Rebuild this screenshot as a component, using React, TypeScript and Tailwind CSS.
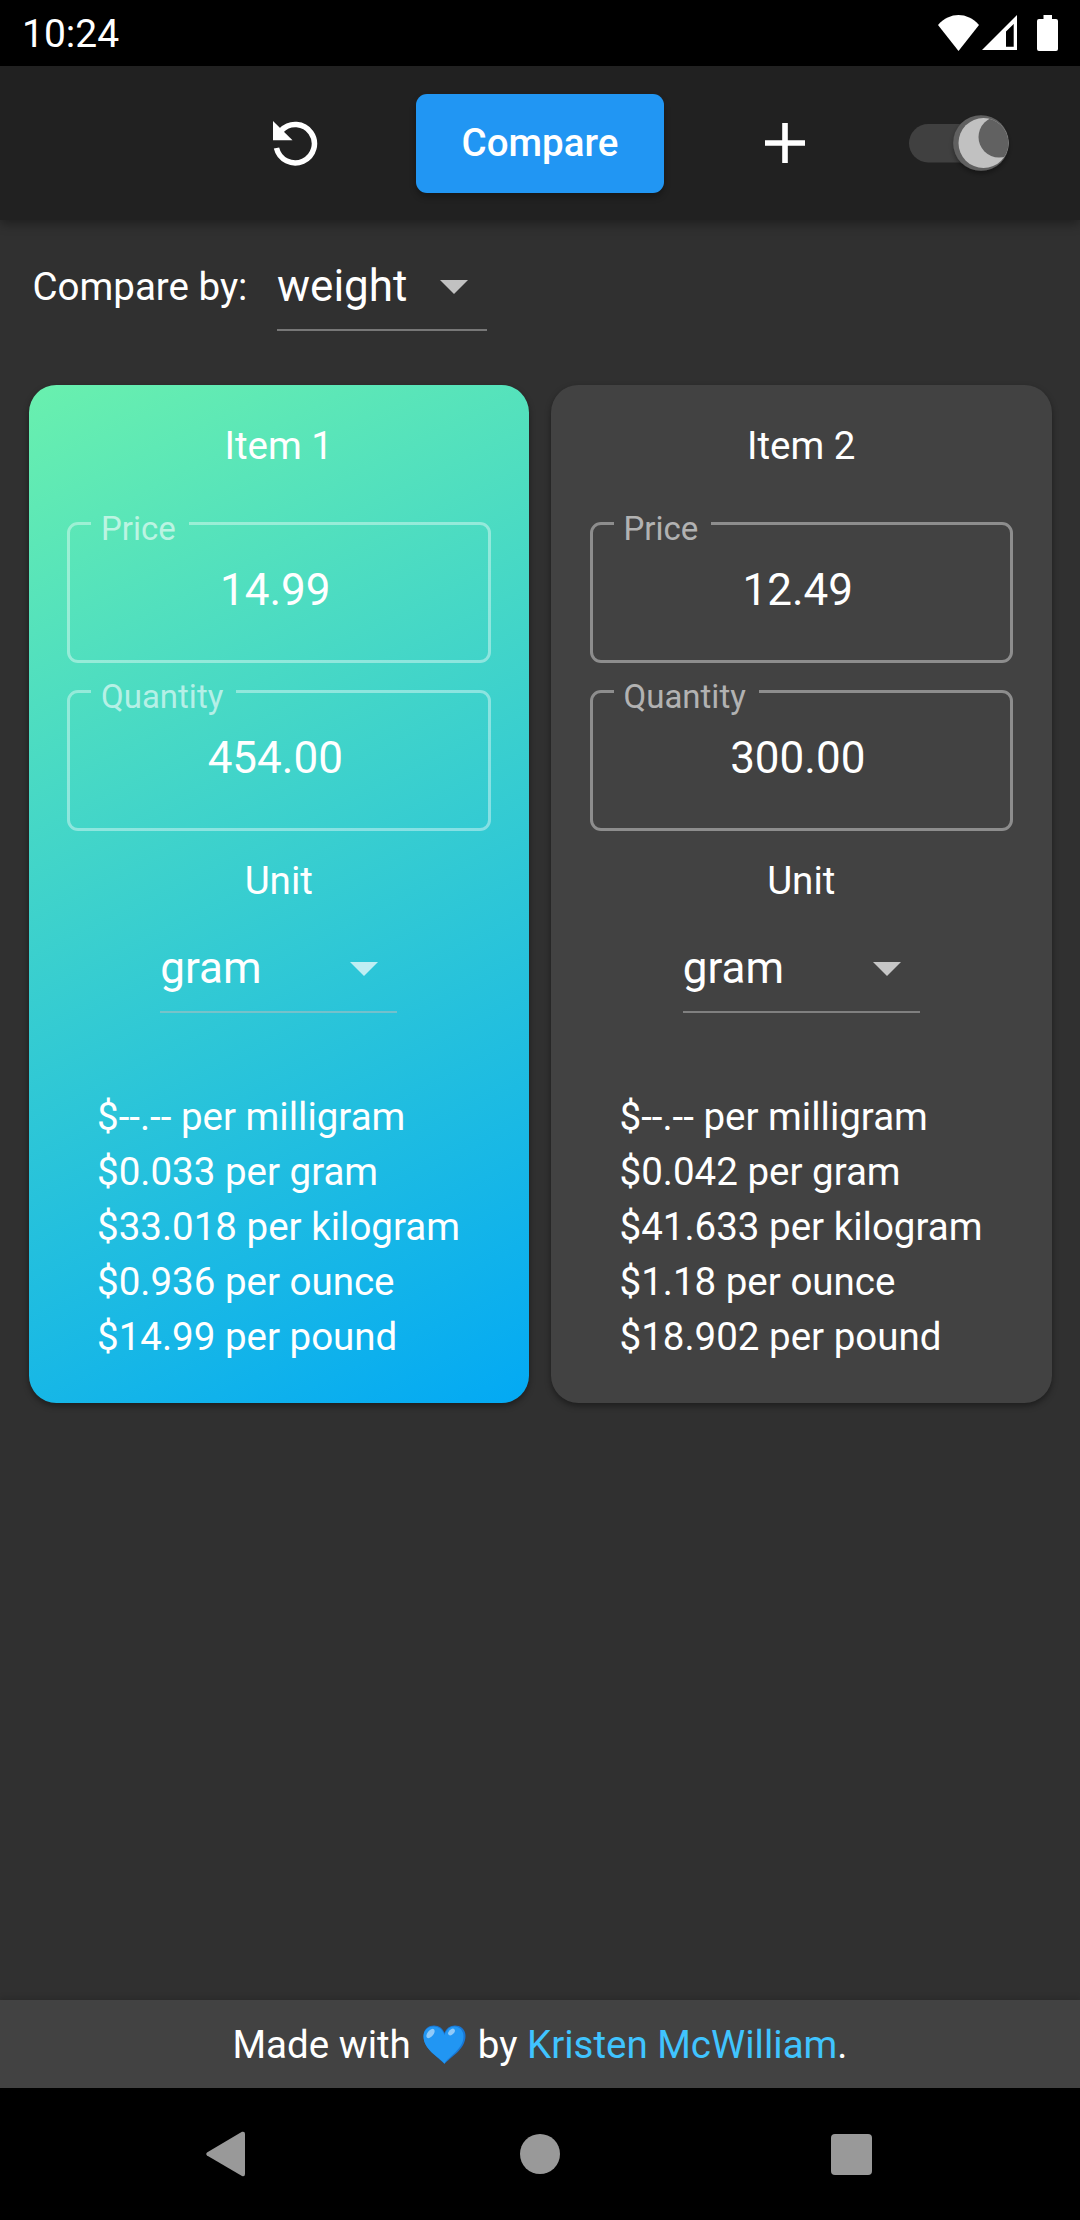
import React from 'react';

type Item = { title: string; price: string; quantity: string; unit: string; rates: string[]; best?: boolean };

const items: Item[] = [
  {
    title: 'Item 1',
    price: '14.99',
    quantity: '454.00',
    unit: 'gram',
    best: true,
    rates: ['$--.-- per milligram', '$0.033 per gram', '$33.018 per kilogram', '$0.936 per ounce', '$14.99 per pound'],
  },
  {
    title: 'Item 2',
    price: '12.49',
    quantity: '300.00',
    unit: 'gram',
    rates: ['$--.-- per milligram', '$0.042 per gram', '$41.633 per kilogram', '$1.18 per ounce', '$18.902 per pound'],
  },
];

function Caret() {
  return (
    <svg className="h-[14px] w-[28px] shrink-0 opacity-70" viewBox="0 0 28 14" fill="white">
      <path d="M0 0h28L14 14z" />
    </svg>
  );
}

function StatusBar() {
  return (
    <div className="flex h-[66px] shrink-0 items-start justify-between bg-black pl-[22px] pr-[22px]">
      <span className="mt-[10px] text-[39px] leading-[48px]">10:24</span>
      <div className="mt-[15px] flex items-start">
        <svg className="mr-[3px] h-[36px] w-[41px]" viewBox="0 0 41 36" fill="white">
          <path d="M0 10C12-3.200 29-3.200 41 10L20.500 36z" />
        </svg>
        <svg className="mr-[20px] h-[35px] w-[35px]" viewBox="0 0 35 35" fill="white" fillRule="evenodd">
          <path d="M35 0V35H0zM31.700 9L24 16.500V31.700H31.700z" />
        </svg>
        <svg className="h-[36px] w-[21px]" viewBox="0 0 21 36" fill="white">
          <path d="M6.500 0h8.500v4h4a2 2 0 0 1 2 2v28a2 2 0 0 1-2 2H2a2 2 0 0 1-2-2V6a2 2 0 0 1 2-2h4.500z" />
        </svg>
      </div>
    </div>
  );
}

function ModeSwitch() {
  return (
    <svg className="ml-[100.5px] h-[64px] w-[108px] overflow-visible" viewBox="905 111 108 64">
      <defs>
        <clipPath id="moon">
          <circle cx="983.5" cy="143" r="25" />
        </clipPath>
        <filter id="thumb" x="-30%" y="-30%" width="160%" height="160%">
          <feDropShadow dx="0" dy="3" stdDeviation="2.5" floodOpacity="0.35" />
        </filter>
      </defs>
      <rect x="909" y="124" width="91" height="38.500" rx="19.250" fill="#404040" />
      <circle cx="981" cy="143" r="27.800" fill="#616161" filter="url(#thumb)" />
      <g clipPath="url(#moon)">
        <rect x="950" y="110" width="60" height="66" fill="#c1c1c1" />
        <circle cx="999" cy="137" r="20.500" fill="#616161" />
      </g>
    </svg>
  );
}

function AppBar() {
  return (
    <header className="relative z-10 flex h-[154px] shrink-0 items-center bg-[#212121] pl-[273px] shadow-[0_4px_10px_rgba(0,0,0,0.35)]">
      <svg className="h-[46px] w-[46px]" viewBox="0 0 46 46">
        <path d="M3.500 28A19.200 19.200 0 1 0 8.300 10.500" fill="none" stroke="white" strokeWidth="5.500" />
        <path d="M0 1V20.300H19.500z" fill="white" />
      </svg>
      <button className="ml-[97px] h-[99px] w-[248px] rounded-[11px] bg-[#2196f3] text-[38.5px] font-medium shadow-[0_4px_6px_rgba(0,0,0,0.3)]">
        Compare
      </button>
      <svg className="ml-[100.5px] h-[40px] w-[40px]" viewBox="0 0 40 40" fill="white">
        <path d="M17.200 0h5.600v17.200H40v5.600H22.800V40h-5.600V22.800H0v-5.600h17.200z" />
      </svg>
      <ModeSwitch />
    </header>
  );
}

function Field({ label, value }: { label: string; value: string }) {
  return (
    <fieldset className="h-[141px] rounded-[11px] border-[3px] border-white/40 pl-[21px]">
      <legend className="h-[3px] pl-[10px] pr-[13px]">
        <span className="relative top-[-13px] block text-[33px] leading-[39px] text-white/60">{label}</span>
      </legend>
      <div className="mt-[39px] pr-[28px] text-center text-[44px] leading-[52px]">{value}</div>
    </fieldset>
  );
}

function ItemCard({ item }: { item: Item }) {
  const surface = item.best ? 'bg-[linear-gradient(153.8deg,#69f0ae,#03a9f4)]' : 'bg-[#424242]';
  return (
    <section
      className={`flex h-[1017.5px] flex-1 flex-col rounded-[27.5px] px-[38.5px] shadow-[0_3px_6px_rgba(0,0,0,0.4)] ${surface}`}
    >
      <h2 className="mt-[38px] text-center text-[38.5px] leading-[45px]">{item.title}</h2>
      <div className="mt-[54px] flex flex-col gap-[27px]">
        <Field label="Price" value={item.price} />
        <Field label="Quantity" value={item.quantity} />
      </div>
      <div className="mt-[27px] text-center text-[38.5px] leading-[45px]">Unit</div>
      <div className="mx-auto mt-[33px] flex h-[77px] w-[237px] items-start justify-between border-b-2 border-[#bdbdbd]/50 pr-[19px]">
        <span className="mt-[6px] text-[44px] leading-[52px]">{item.unit}</span>
        <span className="mt-[26px] flex">
          <Caret />
        </span>
      </div>
      <ul className="mt-[76px] pl-[30px] text-[38.5px] leading-[55px]">
        {item.rates.map((rate) => (
          <li key={rate} className="whitespace-nowrap">
            {rate}
          </li>
        ))}
      </ul>
    </section>
  );
}

function BlueHeart() {
  return (
    <svg className="ml-[12.5px] mr-[11.5px] mt-[25px] h-[40px] w-[43px]" viewBox="0 0 43 40">
      <path
        d="M21.500 39C16 32.500 0.500 24.500 0.500 11C0.500 4.500 5 0.500 11 0.500C16 0.500 20 3.500 21.500 8C23 3.500 27 0.500 32 0.500C38 0.500 42.500 4.500 42.500 11C42.500 24.500 27 32.500 21.500 39z"
        fill="#1976d2"
      />
      <path
        d="M21.500 38.500C16 32 0.500 24.500 0.500 11.500C0.500 5.500 5 1.500 10.500 1.500C16 1.500 20 5 21.500 10C23 5 26.500 1.500 31.500 1.500C36.500 1.500 40.500 5.500 40.500 11.500C40.500 24 26 31 21.500 38.500z"
        fill="#2196f3"
      />
      <ellipse cx="7.500" cy="8.500" rx="3" ry="5.500" transform="rotate(38 7.500 8.500)" fill="#90caf9" />
      <ellipse cx="28.500" cy="7" rx="2.500" ry="4" transform="rotate(45 28.500 7)" fill="#90caf9" />
    </svg>
  );
}

export default function App() {
  return (
    <div className="flex h-[2220px] w-[1080px] flex-col overflow-hidden bg-[#303030] font-['Roboto',sans-serif] text-white">
      <StatusBar />
      <AppBar />
      <main className="flex flex-1 flex-col">
        <div className="flex h-[165px] items-start pl-[32.5px]">
          <span className="mt-[44px] w-[244.5px] whitespace-nowrap text-[38.5px] leading-[45px]">Compare by:</span>
          <div className="mt-[34px] flex h-[77px] w-[210px] items-start justify-between border-b-2 border-[#bdbdbd]/50 pr-[19px]">
            <span className="mt-[6px] text-[44px] leading-[52px]">weight</span>
            <span className="mt-[26px] flex">
              <Caret />
            </span>
          </div>
        </div>
        <div className="flex gap-[22px] px-[28.5px]">
          {items.map((item) => (
            <ItemCard key={item.title} item={item} />
          ))}
        </div>
      </main>
      <footer className="flex h-[88px] shrink-0 items-start justify-center bg-[#424242] text-[38.5px] leading-[45px] shadow-[0_-2px_6px_rgba(0,0,0,0.15)]">
        <span className="mt-[22px]">Made with</span>
        <BlueHeart />
        <span className="mt-[22px] whitespace-pre">
          {'by '}
          <a className="text-[#40c4ff]">Kristen McWilliam</a>.
        </span>
      </footer>
      <nav className="flex h-[132px] shrink-0 items-center justify-between bg-black pl-[206px] pr-[208.5px]">
        <svg className="h-[46px] w-[39px]" viewBox="0 0 39 46" fill="#999">
          <path d="M1 21.500L36 0.800Q39 0 39 3V43Q39 46 36 45L1 24.500Q-0.500 23 1 21.500z" />
        </svg>
        <div className="ml-[4px] size-[40px] rounded-full bg-[#999]" />
        <div className="size-[41px] rounded-[4px] bg-[#999]" />
      </nav>
    </div>
  );
}
